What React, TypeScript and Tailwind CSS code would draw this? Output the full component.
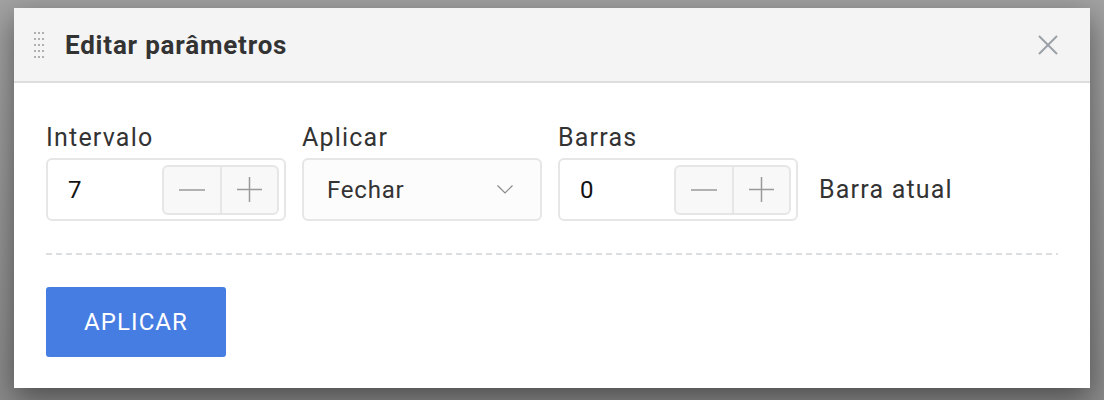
import React from "react";

function Grip() {
  const dots = [];
  for (let r = 0; r < 5; r++) {
    for (let c = 0; c < 3; c++) {
      dots.push(<rect key={`${r}-${c}`} x={c * 4} y={r * 6} width={2} height={2} fill="#b0b0b0" />);
    }
  }
  return (
    <svg width="10" height="26" viewBox="0 0 10 26" className="block">
      {dots}
    </svg>
  );
}

function Stepper() {
  return (
    <div className="flex h-[50px] w-[117px] rounded-[6px] border-2 border-[#e6e6e6] bg-[#f8f8f8]">
      <div className="flex flex-1 items-center justify-center border-r-2 border-[#e6e6e6]">
        <svg width="26" height="2" viewBox="0 0 26 2" className="block">
          <line x1="0" y1="1" x2="26" y2="1" stroke="#9a9a9a" strokeWidth="1.5" />
        </svg>
      </div>
      <div className="flex flex-1 items-center justify-center">
        <svg width="25" height="25" viewBox="0 0 25 25" className="block">
          <line x1="0" y1="12.5" x2="25" y2="12.5" stroke="#9a9a9a" strokeWidth="1.5" />
          <line x1="12.5" y1="0" x2="12.5" y2="25" stroke="#9a9a9a" strokeWidth="1.5" />
        </svg>
      </div>
    </div>
  );
}

function NumberField({ label, value }: { label: string; value: string }) {
  return (
    <div className="flex flex-col">
      <div className="h-[24px] text-[25px] leading-[24px] tracking-[1.2px] text-[#333333]">{label}</div>
      <div className="mt-[8px] flex h-[63px] w-[240px] items-center justify-between rounded-[6px] border-2 border-[#e6e6e6] pl-[20px] pr-[5px]">
        <span className="text-[24px] tracking-[0.8px] text-[#111111]">{value}</span>
        <Stepper />
      </div>
    </div>
  );
}

export default function App() {
  return (
    <div className="h-[400px] w-[1104px] bg-[linear-gradient(to_bottom,#a2a2a2,#8a8a8a)] pl-[14px] pt-[8px] font-['Roboto',sans-serif]">
      <div className="flex h-[380px] w-[1076px] flex-col bg-white shadow-[0_10px_28px_rgba(0,0,0,0.45)]">
        <div className="flex h-[75px] items-center border-b-2 border-[#dddddd] bg-[#f4f4f4] pl-[20px] pr-[32px]">
          <Grip />
          <div className="ml-[21px] mt-[2px] text-[26px] font-bold tracking-[0.8px] text-[#333333]">Editar parâmetros</div>
          <div className="ml-auto">
            <svg width="20" height="20" viewBox="0 0 20 20" className="block">
              <line x1="1" y1="1" x2="19" y2="19" stroke="#9aa0a6" strokeWidth="2" />
              <line x1="19" y1="1" x2="1" y2="19" stroke="#9aa0a6" strokeWidth="2" />
            </svg>
          </div>
        </div>
        <div className="flex flex-col px-[32px] pt-[43px]">
          <div className="flex items-end gap-[16px]">
            <NumberField label="Intervalo" value="7" />
            <div className="flex flex-col">
              <div className="h-[24px] text-[25px] leading-[24px] tracking-[1.2px] text-[#333333]">Aplicar</div>
              <div className="mt-[8px] flex h-[63px] w-[240px] items-center justify-between rounded-[6px] border-2 border-[#e6e6e6] bg-[#fcfcfc] pl-[23px] pr-[27px]">
                <span className="text-[24px] tracking-[0.8px] text-[#333333]">Fechar</span>
                <svg width="16" height="9" viewBox="0 0 16 9" className="block">
                  <polyline points="0.5,0.5 8,8 15.5,0.5" fill="none" stroke="#8a8a8a" strokeWidth="1.2" />
                </svg>
              </div>
            </div>
            <NumberField label="Barras" value="0" />
            <div className="flex h-[63px] items-center pl-[5px] text-[25px] tracking-[1.2px] text-[#333333]">Barra atual</div>
          </div>
          <div className="mt-[32px] h-[2px] w-[1012px] bg-[repeating-linear-gradient(to_right,#dcdfe2_0_6px,transparent_6px_10px)]" />
          <button className="mt-[32px] flex h-[70px] w-[180px] items-center justify-center rounded-[3px] bg-[#467de3] text-[24px] tracking-[1.1px] text-white">
            APLICAR
          </button>
        </div>
      </div>
    </div>
  );
}
